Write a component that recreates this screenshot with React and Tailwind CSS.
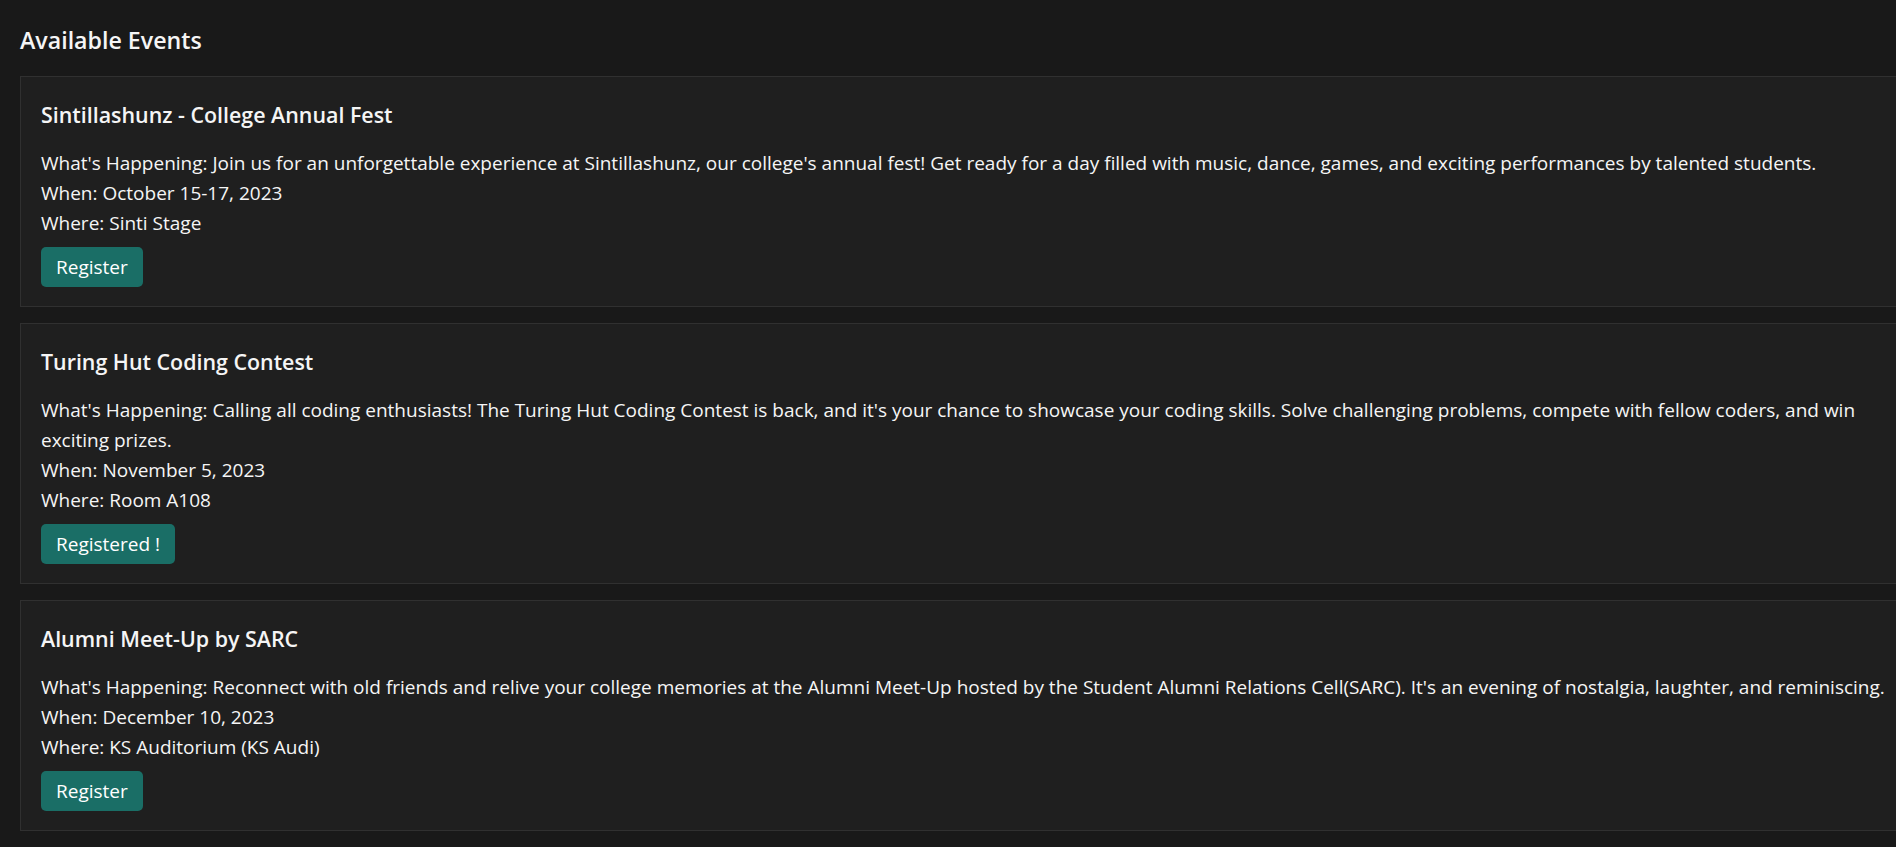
import React from "react";

const events = [
  {
    title: "Sintillashunz - College Annual Fest",
    lines: [
      "What's Happening: Join us for an unforgettable experience at Sintillashunz, our college's annual fest! Get ready for a day filled with music, dance, games, and exciting performances by talented students.",
    ],
    when: "October 15-17, 2023",
    where: "Sinti Stage",
    button: "Register",
  },
  {
    title: "Turing Hut Coding Contest",
    lines: [
      "What's Happening: Calling all coding enthusiasts! The Turing Hut Coding Contest is back, and it's your chance to showcase your coding skills. Solve challenging problems, compete with fellow coders, and win",
      "exciting prizes.",
    ],
    when: "November 5, 2023",
    where: "Room A108",
    button: "Registered !",
  },
  {
    title: "Alumni Meet-Up by SARC",
    lines: [
      "What's Happening: Reconnect with old friends and relive your college memories at the Alumni Meet-Up hosted by the Student Alumni Relations Cell(SARC). It's an evening of nostalgia, laughter, and reminiscing.",
    ],
    when: "December 10, 2023",
    where: "KS Auditorium (KS Audi)",
    button: "Register",
  },
];

export default function App() {
  return (
    <div
      className="w-screen h-screen overflow-hidden bg-[#191919] text-[#f5f5f5]"
      style={{ fontFamily: '"Open Sans", "Noto Sans", sans-serif' }}
    >
      <div className="w-[1960px] pl-[20px] pt-[24px]">
        <h2 className="text-[23.2px] leading-[32px] font-semibold mb-[20px]">
          Available Events
        </h2>
        <div className="flex flex-col gap-[16px]">
          {events.map((e) => (
            <div
              key={e.title}
              className="border border-[#303030] bg-[#1f1f1f] px-[20px] pt-[20px] pb-[19px]"
            >
              <h3 className="text-[21.4px] leading-[36px] font-semibold mb-[15px]">
                {e.title}
              </h3>
              <div className="text-[19px] leading-[30px] whitespace-nowrap">
                {e.lines.map((l) => (
                  <p key={l}>{l}</p>
                ))}
                <p>When: {e.when}</p>
                <p>Where: {e.where}</p>
              </div>
              <button className="mt-[9px] h-[40px] px-[15px] rounded-[5px] bg-[#1a6e66] text-[19px] text-white">
                {e.button}
              </button>
            </div>
          ))}
        </div>
      </div>
    </div>
  );
}
